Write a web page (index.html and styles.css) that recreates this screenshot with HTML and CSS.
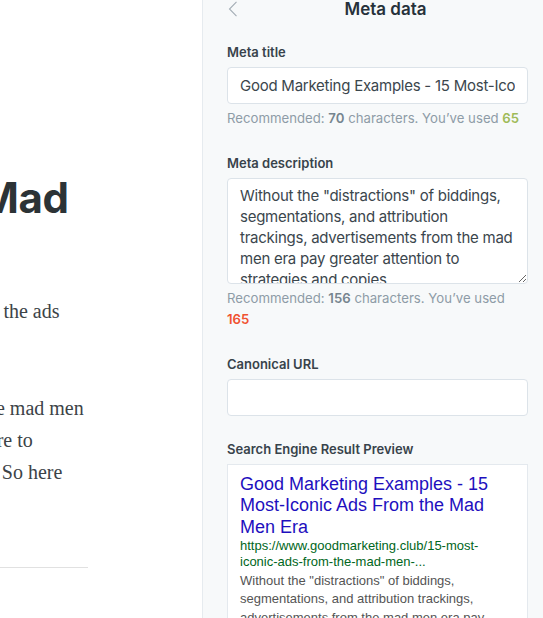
FILE: index.html
```html
<!DOCTYPE html>
<html lang="en">
<head>
    <meta charset="UTF-8">
    <title>Meta data</title>
    <link rel="stylesheet" href="styles.css">
</head>
<body>
    <div class="app">
        <main class="editor">
            <article class="post">
                <h1 class="post-title">15 Most-Iconic Ads From the Mad<br>Men Era</h1>
                <p>In the golden age of advertising, ad writers relied on big ideas. Let’s revisit the ads<br>that shaped an era.</p>
                <p>Without the “distractions” of bidding, segmentations, tracking, ads from the mad men<br>era pay greater attention to strategies and copies than most digital teams care to<br>do. They relied on a clean message, a bold visual and memorable headline. So here<br>are fifteen of our favourites.</p>
                <hr>
            </article>
        </main>

        <aside class="settings">
            <header class="settings-header">
                <button class="back" type="button">
                    <svg width="10" height="16" viewBox="0 0 10 16"><path d="M8.5 0.8 L1.5 8 L8.5 15.2" fill="none" stroke="#a3adb5" stroke-width="1.1"/></svg>
                </button>
                <h2>Meta data</h2>
            </header>

            <div class="field">
                <label for="meta-title">Meta title</label>
                <input id="meta-title" class="input" type="text" value="Good Marketing Examples - 15 Most-Iconic Ads From the Mad Men Era">
                <p class="hint">Recommended: <strong>70</strong> characters. You’ve used <strong class="ok">65</strong></p>
            </div>

            <div class="field">
                <label for="meta-desc">Meta description</label>
                <textarea id="meta-desc" class="input textarea">Without the "distractions" of biddings, segmentations, and attribution trackings, advertisements from the mad men era pay greater attention to strategies and copies.</textarea>
                <p class="hint">Recommended: <strong>156</strong> characters. You’ve used <strong class="over">165</strong></p>
            </div>

            <div class="field">
                <label for="canonical">Canonical URL</label>
                <input id="canonical" class="input" type="text">
            </div>

            <div class="field">
                <label>Search Engine Result Preview</label>
                <div class="serp">
                    <div class="serp-title">Good Marketing Examples - 15 Most-Iconic Ads From the Mad Men Era</div>
                    <div class="serp-link">https://www.goodmarketing.club/15-most-iconic-ads-from-the-mad-men-...</div>
                    <div class="serp-desc">Without the "distractions" of biddings, segmentations, and attribution trackings, advertisements from the mad men era pay greater attention to strategies and copies.</div>
                </div>
            </div>
        </aside>
    </div>
</body>
</html>
```

FILE: styles.css
```css
body { margin: 0; overflow: hidden; background: #fff; }
.app { display: flex; height: 100vh; overflow: hidden; }

/* editor, scrolled so only the end of each line shows */
.editor { flex: 0 0 202px; overflow: hidden; background: #fff; }
.post { width: 690px; margin-left: -602px; padding-top: 172px; }
.post-title { margin: 0 0 17px; font-family: Inter, "Liberation Sans", sans-serif; font-size: 42px; font-weight: 700; letter-spacing: -0.4px; line-height: 52.8px; color: #2c3336; white-space: nowrap; }
.post p { margin: 0 0 33px; font-family: "Liberation Serif", serif; font-size: 20px; line-height: 32px; color: #3c4347; white-space: nowrap; }
.post p:last-of-type { margin-bottom: 47px; }
.post hr { margin: 0; border: none; border-top: 1px solid #e1e1e1; }

/* settings menu */
.settings { flex: 1; overflow: hidden; background: #f7f9fa; border-left: 1px solid #e6ebef; padding: 0 15px 0 24px; font-family: Inter, "Liberation Sans", sans-serif; }
.settings-header { display: grid; grid-template-columns: 1fr auto 1fr; align-items: start; height: 18px; margin: 0 -15px 26px -25px; padding-left: 26px; }
.back { justify-self: start; border: none; background: none; padding: 0; margin-top: 1px; height: 16px; cursor: pointer; }
.back svg { display: block; }
.settings-header h2 { margin: 0; font-size: 17px; font-weight: 600; line-height: 18px; color: #26313a; }

.field { margin-bottom: 25px; }
.field label { display: block; margin-bottom: 7px; font-size: 13px; font-weight: 600; line-height: 16px; color: #38434b; }
.input { display: block; box-sizing: border-box; width: 100%; height: 37px; padding: 0 12px; border: 1px solid #dce3e9; border-radius: 4px; background: #fff; font-family: Inter, "Liberation Sans", sans-serif; font-size: 15px; letter-spacing: -0.25px; color: #3b464d; outline: none; }
.textarea { height: 106px; padding: 6px 12px; line-height: 21px; resize: vertical; overflow: hidden; }
.hint { margin: 4px 0 0; font-size: 13.2px; line-height: 21.5px; color: #8e9ca7; }
.hint strong { font-weight: 600; color: #76858f; }
.hint .ok { color: #9fbb58; }
.hint .over { color: #f05230; }

/* google style preview */
.serp { background: #fff; border: 1px solid #e4e9ee; padding: 9px 12px; font-family: "Liberation Sans", Arial, sans-serif; }
.serp-title { font-size: 18px; line-height: 21.6px; color: #1e0fbe; }
.serp-link { font-size: 13px; line-height: 16px; color: #006621; }
.serp-desc { margin-top: 2px; font-size: 13px; line-height: 1.4; color: #545454; }
```
